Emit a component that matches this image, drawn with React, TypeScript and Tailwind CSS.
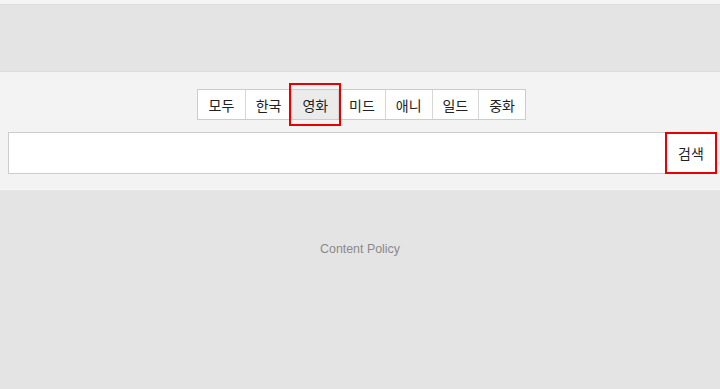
import { useState } from "react";

const tabs = ["모두", "한국", "영화", "미드", "애니", "일드", "중화"];

export default function App() {
  const [active, setActive] = useState("영화");
  const [query, setQuery] = useState("");

  return (
    <div
      className="min-h-screen bg-[#e4e4e4]"
      style={{ fontFamily: '"Noto Sans CJK KR", "Liberation Sans", sans-serif' }}
    >
      {/* top strip */}
      <div className="h-[5px] bg-[#f5f5f5] border-b border-[#dddddd]" />
      <div className="h-[66px]" />

      {/* Category + search panel */}
      <section className="bg-[#f3f3f3] border-t border-[#dddddd] border-b border-b-[#f8f8f8] pl-2 pr-[3px] pt-[17px] pb-[15px]">
        <div className="flex justify-center pr-[2px]">
          <div className="flex border border-[#cccccc] bg-white">
            {tabs.map((tab, i) => (
              <button
                key={tab}
                onClick={() => setActive(tab)}
                className={`relative w-[46.7px] h-[29px] text-[14px] leading-none text-[#222] ${
                  i > 0 ? "border-l border-[#d6d6d6]" : ""
                } ${active === tab ? "bg-[#ebebeb]" : "bg-white"}`}
              >
                {tab}
                {active === tab && (
                  <span className="absolute z-10 left-[-3px] right-[-3px] top-[-7px] bottom-[-7px] border-2 border-[#e80000]" />
                )}
              </button>
            ))}
          </div>
        </div>

        <div className="mt-[12px] flex">
          <input
            value={query}
            onChange={(e) => setQuery(e.target.value)}
            className="flex-1 h-[42px] bg-white border border-[#cccccc] outline-none px-2 text-[14px]"
          />
          <button className="w-[52px] h-[42px] -ml-[1px] bg-white border-2 border-[#e80000] text-[14px] text-[#222]">
            검색
          </button>
        </div>
      </section>

      {/* footer */}
      <footer className="pt-[44px] text-center">
        <a
          href="#"
          className="text-[12.4px] text-[#8a8a8a]"
          style={{ fontFamily: '"Liberation Sans", Arial, sans-serif' }}
        >
          Content Policy
        </a>
      </footer>
    </div>
  );
}
